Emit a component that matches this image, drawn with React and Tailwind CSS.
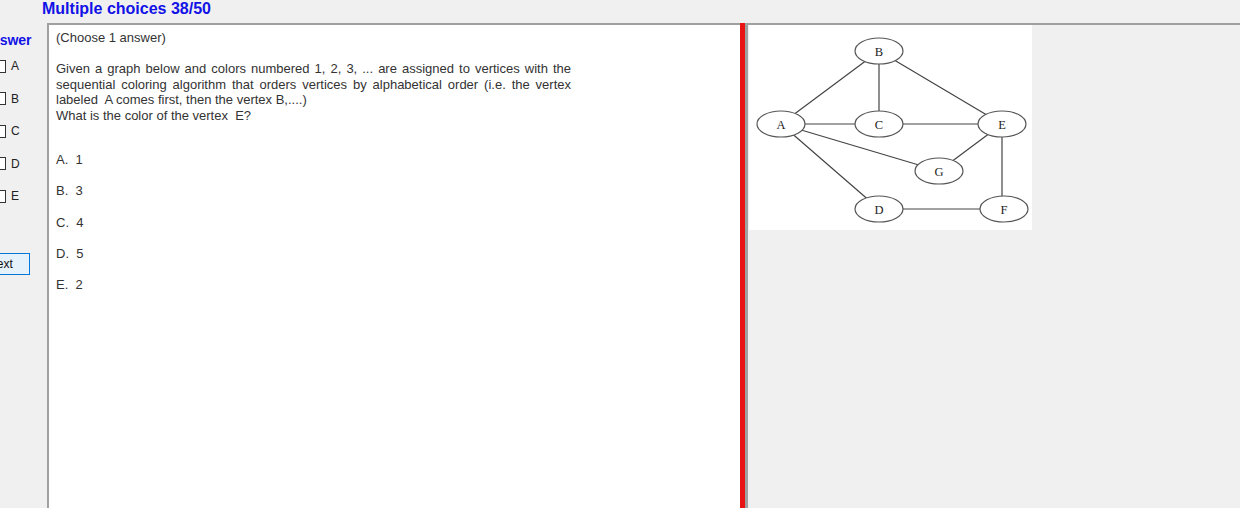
import React from 'react';

const nodes = {
  A: [32, 99],
  B: [130, 26],
  C: [130, 99],
  E: [253, 99],
  G: [190, 146],
  D: [130, 184],
  F: [255, 184],
};

const edges = [
  ['A', 'B'], ['B', 'C'], ['B', 'E'], ['A', 'C'], ['C', 'E'],
  ['A', 'G'], ['G', 'E'], ['A', 'D'], ['D', 'F'], ['E', 'F'],
];

const letters = ['A', 'B', 'C', 'D', 'E'];
const options = ['A.\u00a0 1', 'B.\u00a0 3', 'C.\u00a0 4', 'D.\u00a0 5', 'E.\u00a0 2'];

function Graph() {
  return (
    <svg width="283" height="205" viewBox="0 0 283 205">
      {edges.map(([a, b]) => {
        const [x1, y1] = nodes[a];
        let [x2, y2] = nodes[b];
        if (a === 'E' && b === 'F') x2 = x1;
        return <line key={a + b} x1={x1} y1={y1} x2={x2} y2={y2} stroke="#444" strokeWidth="1.2" />;
      })}
      {Object.entries(nodes).map(([k, [x, y]]) => (
        <g key={k}>
          <ellipse cx={x} cy={y} rx="24" ry="13" fill="#fff" stroke="#555" strokeWidth="1.2" />
          <text x={x} y={y + 4.5} textAnchor="middle" fontSize="12.5" fill="#222" fontFamily="'Liberation Serif', 'Times New Roman', serif">{k}</text>
        </g>
      ))}
    </svg>
  );
}

export default function App() {
  return (
    <div className="w-[1240px] h-[508px] bg-[#f0f0f0] overflow-hidden font-['Liberation_Sans',Arial,sans-serif]">
      {/* header */}
      <div className="h-[23px] pl-[42px] text-[16px] leading-[17px] font-bold text-[#1212e6]">
        Multiple choices 38/50
      </div>

      <div className="flex h-[485px]">
        {/* answer sidebar, cut off by the window edge */}
        <div className="w-[47px] flex-none overflow-hidden flex flex-col">
          <div className="mt-[9px] h-[16px] leading-[16px] ml-[-19px] text-[14px] font-bold text-[#1212e6] whitespace-nowrap">Answer</div>
          <div className="mt-[2px]">
            {letters.map((l) => (
              <div key={l} className="h-[32.5px] flex items-center gap-[5px] ml-[-7px]">
                <div className="w-[13px] h-[13px] border border-[#333] bg-white flex-none" />
                <span className="text-[12px] text-[#222]">{l}</span>
              </div>
            ))}
          </div>
          <div className="mt-[40px] ml-[-29px] w-[59px] h-[22px] flex-none border border-[#0078d7] bg-[#e5f1fb] flex items-center justify-center text-[12px] text-[#111]">
            Next
          </div>
        </div>

        {/* question panel */}
        <div className="w-[693px] flex-none bg-white border-l-2 border-t-2 border-[#a0a0a0] pl-[7px] pt-[5px] text-[13px] leading-[15.5px] text-[#333]">
          <div>(Choose 1 answer)</div>
          <div className="h-[15.5px]" />
          <div className="w-[515px]">
            <div className="text-justify [text-align-last:justify]">Given a graph below and colors numbered 1, 2, 3, ... are assigned to vertices with the</div>
            <div className="text-justify [text-align-last:justify]">sequential coloring algorithm that orders vertices by alphabetical order (i.e. the vertex</div>
            <div>labeled&nbsp; A comes first, then the vertex B,....)</div>
            <div>What is the color of the vertex&nbsp; E?</div>
          </div>
          <div className="mt-[21px]">
            {options.map((o) => (
              <div key={o} className="leading-[31.25px]">{o}</div>
            ))}
          </div>
        </div>

        {/* separator */}
        <div className="w-[5px] flex-none bg-[#e81313]" />

        {/* figure panel */}
        <div className="flex-1 border-l-[3px] border-t-2 border-[#a0a0a0] pl-px">
          <div className="w-[283px] h-[205px] bg-white">
            <Graph />
          </div>
        </div>
      </div>
    </div>
  );
}
